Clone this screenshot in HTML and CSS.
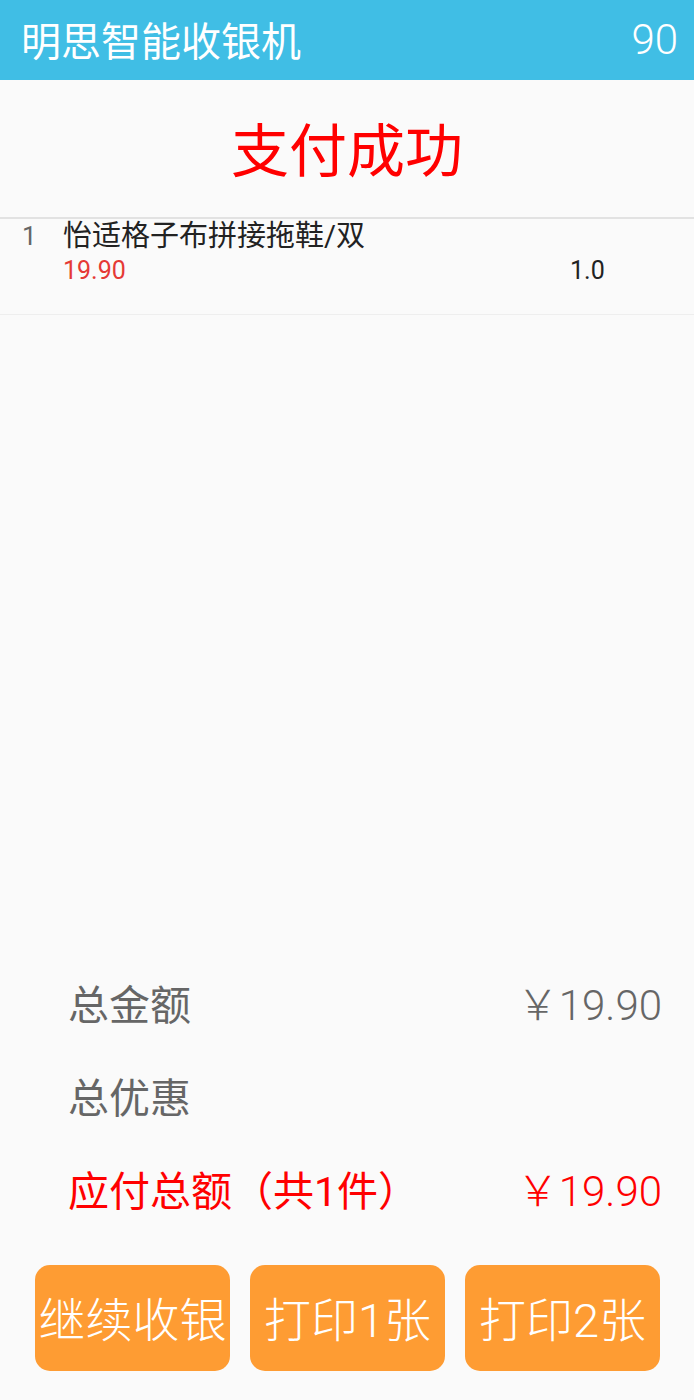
FILE: index.html
```html
<!DOCTYPE html>
<html lang="zh-CN">
<head>
    <meta charset="UTF-8">
    <title>支付成功 - 明思智能收银机</title>
    <link rel="stylesheet" href="styles.css">
</head>
<body>
    <div class="page">
        <header class="topbar">
            <span class="topbar-title">明思智能收银机</span>
            <span class="topbar-count">90</span>
        </header>

        <h1 class="result">支付成功</h1>

        <div class="item-list">
            <div class="item">
                <span class="item-no">1</span>
                <div class="item-body">
                    <div class="item-name">怡适格子布拼接拖鞋/双</div>
                    <div class="item-meta">
                        <span class="item-price">19.90</span>
                        <span class="item-qty">1.0</span>
                    </div>
                </div>
            </div>
        </div>

        <div class="summary">
            <div class="summary-row">
                <span>总金额</span>
                <span class="amount">￥19.90</span>
            </div>
            <div class="summary-row">
                <span>总优惠</span>
                <span class="amount"></span>
            </div>
            <div class="summary-row payable">
                <span>应付总额（共1件）</span>
                <span class="amount">￥19.90</span>
            </div>
        </div>

        <div class="actions">
            <button type="button" class="action-btn">继续收银</button>
            <button type="button" class="action-btn">打印1张</button>
            <button type="button" class="action-btn">打印2张</button>
        </div>
    </div>
</body>
</html>
```

FILE: styles.css
```css
html, body {
    margin: 0;
    height: 100%;
}
body {
    background: #fafafa;
    font-family: Roboto, "Noto Sans CJK SC", sans-serif;
}
.page {
    display: flex;
    flex-direction: column;
    height: 100%;
}
.topbar {
    height: 80px;
    flex-shrink: 0;
    display: flex;
    align-items: center;
    justify-content: space-between;
    padding: 0 16px 2px 21px;
    box-sizing: border-box;
    background: #40bee5;
    color: #fff;
    font-size: 40px;
}
.topbar-count {
    font-weight: 300;
    font-size: 42px;
}
.result {
    margin: 0;
    height: 137px;
    display: flex;
    align-items: center;
    justify-content: center;
    color: #f00;
    font-size: 58px;
    font-weight: normal;
    padding-bottom: 4px;
    box-sizing: border-box;
}
.item-list {
    border-top: 2px solid #e2e2e2;
}
.item {
    display: flex;
    padding: 0 24px 2px 22px;
    height: 96px;
    box-sizing: border-box;
    border-bottom: 1px solid #eeeeee;
}
.item-no {
    width: 41px;
    flex-shrink: 0;
    color: #666;
    font-size: 26px;
    line-height: 34px;
}
.item-body {
    flex: 1;
}
.item-name {
    color: #222;
    font-size: 29px;
    line-height: 34px;
}
.item-meta {
    display: grid;
    grid-template-columns: 507px auto;
    font-size: 25px;
    line-height: 36px;
}
.item-price {
    color: #e53935;
}
.item-qty {
    color: #222;
}
.summary {
    margin-top: auto;
    padding: 0 32px 0 68px;
}
.summary-row {
    height: 93px;
    display: flex;
    align-items: center;
    justify-content: space-between;
    padding-bottom: 8px;
    box-sizing: border-box;
    color: #666;
    font-size: 41px;
}
.summary-row .amount {
    font-weight: 300;
    font-size: 42px;
}
.summary-row.payable {
    color: #f00;
}
.actions {
    display: grid;
    grid-template-columns: repeat(3, 195px);
    gap: 20px;
    padding: 27px 34px 29px 35px;
}
.action-btn {
    height: 106px;
    border: none;
    border-radius: 15px;
    background: #fe9c33;
    color: #fff;
    font-family: Roboto, "Noto Sans CJK SC", sans-serif;
    font-size: 47px;
    font-weight: 300;
    padding: 0 0 4px 0;
    white-space: nowrap;
    cursor: pointer;
}
```
